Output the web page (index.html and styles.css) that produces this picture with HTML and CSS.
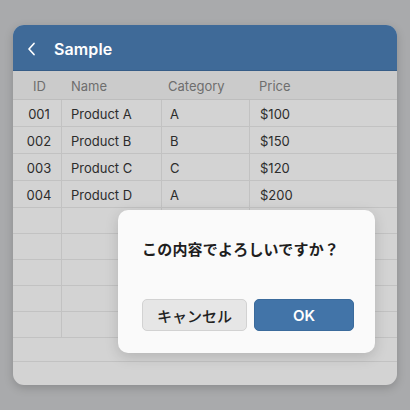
FILE: index.html
```html
<!DOCTYPE html>
<html lang="ja">
<head>
<meta charset="utf-8">
<link rel="stylesheet" href="styles.css">
</head>
<body>
<div class="card">
  <div class="appbar">
    <svg class="back" width="10" height="14" viewBox="0 0 10 14"><path d="M7 1.5 L2 7 L7 12.5" fill="none" stroke="#fff" stroke-width="1.7" stroke-linecap="round" stroke-linejoin="round"/></svg>
    <span class="title">Sample</span>
  </div>
  <div class="table">
    <div class="row head"><div class="c c0">ID</div><div class="c c1">Name</div><div class="c c2">Category</div><div class="c c3">Price</div></div>
    <div class="row data"><div class="c c0">001</div><div class="c c1">Product A</div><div class="c c2">A</div><div class="c c3">$100</div></div>
    <div class="row data"><div class="c c0">002</div><div class="c c1">Product B</div><div class="c c2">B</div><div class="c c3">$150</div></div>
    <div class="row data"><div class="c c0">003</div><div class="c c1">Product C</div><div class="c c2">C</div><div class="c c3">$120</div></div>
    <div class="row data"><div class="c c0">004</div><div class="c c1">Product D</div><div class="c c2">A</div><div class="c c3">$200</div></div>
    <div class="row empty"><div class="c c0"></div><div class="c c1"></div><div class="c c2"></div><div class="c c3"></div></div>
    <div class="row empty"><div class="c c0"></div><div class="c c1"></div><div class="c c2"></div><div class="c c3"></div></div>
    <div class="row empty"><div class="c c0"></div><div class="c c1"></div><div class="c c2"></div><div class="c c3"></div></div>
    <div class="row empty"><div class="c c0"></div><div class="c c1"></div><div class="c c2"></div><div class="c c3"></div></div>
    <div class="row empty"><div class="c c0"></div><div class="c c1"></div><div class="c c2"></div><div class="c c3"></div></div>
    <div class="row blank"></div>
  </div>
</div>
<div class="dialog">
  <div class="msg">この内容でよろしいですか？</div>
  <div class="actions">
    <button class="btn cancel">キャンセル</button>
    <button class="btn ok">OK</button>
  </div>
</div>
</body>
</html>
```
FILE: styles.css
```css
* { box-sizing: border-box; }
html, body { margin: 0; }
body {
  width: 410px;
  height: 410px;
  background: #a9aaac;
  padding: 25px 13px;
  font-family: Inter, "Noto Sans", "Noto Sans CJK JP", sans-serif;
  position: relative;
  overflow: hidden;
}
.card {
  width: 384px;
  height: 360px;
  border-radius: 11px;
  overflow: hidden;
  background: #d3d3d3;
  box-shadow: 0 3px 10px rgba(0,0,0,0.18);
}
.appbar {
  height: 46px;
  background: #3f6a98;
  display: flex;
  align-items: center;
  padding: 3px 0 0 14px;
  border-bottom: 1px solid #365d87;
}
.back { margin-right: 17px; }
.title {
  color: #fff;
  font-size: 16px;
  font-weight: 600;
  letter-spacing: 0.1px;
}
.table { display: flex; flex-direction: column; }
.row {
  display: grid;
  grid-template-columns: 49px 100px 88px 1fr;
  border-bottom: 1px solid #c2c2c2;
}
.row.head { height: 29px; background: #cbcbcb; color: #6e6e6e; border-bottom-color: #bdbdbd; }
.row.data { height: 27px; color: #2c2c2c; }
.row.empty { height: 26px; }
.row.blank { height: 24px; }
.c {
  display: flex;
  align-items: center;
  font-size: 13px;
  border-right: 1px solid #c2c2c2;
  padding-left: 9px;
}
.data .c { padding-top: 2px; }
.c3 { border-right: none; padding-left: 9px; }
.c0 { justify-content: center; padding-left: 4px; }
.head .c { border-right: none; padding-top: 1px; }
.head .c2 { padding-left: 6px; }
.data .c2 { padding-left: 8px; }
.data .c3 { padding-left: 10px; }
.dialog {
  position: absolute;
  left: 118px;
  top: 210px;
  width: 257px;
  height: 143px;
  background: #fafafa;
  border-radius: 10px;
  box-shadow: 0 4px 14px rgba(0,0,0,0.15);
  padding: 29px 21px 22px 24px;
  display: flex;
  flex-direction: column;
  justify-content: space-between;
}
.msg {
  font-family: "Noto Sans CJK JP", sans-serif;
  font-size: 15px;
  font-weight: 700;
  color: #1e1e1e;
  line-height: 20px;
  letter-spacing: 0.2px;
}
.actions { display: flex; gap: 7px; }
.btn {
  height: 32px;
  border-radius: 5px;
  font-size: 15px;
  margin: 0;
  padding: 0;
}
.cancel {
  width: 105px;
  background: #e6e6e6;
  border: 1px solid #d2d2d2;
  color: #222;
  font-family: "Noto Sans CJK JP", sans-serif;
  font-weight: 500;
}
.ok {
  width: 100px;
  background: #4274a8;
  border: 1px solid #3b6b9c;
  color: #fff;
  font-family: Inter, "Noto Sans", sans-serif;
  font-weight: 600;
}
```
